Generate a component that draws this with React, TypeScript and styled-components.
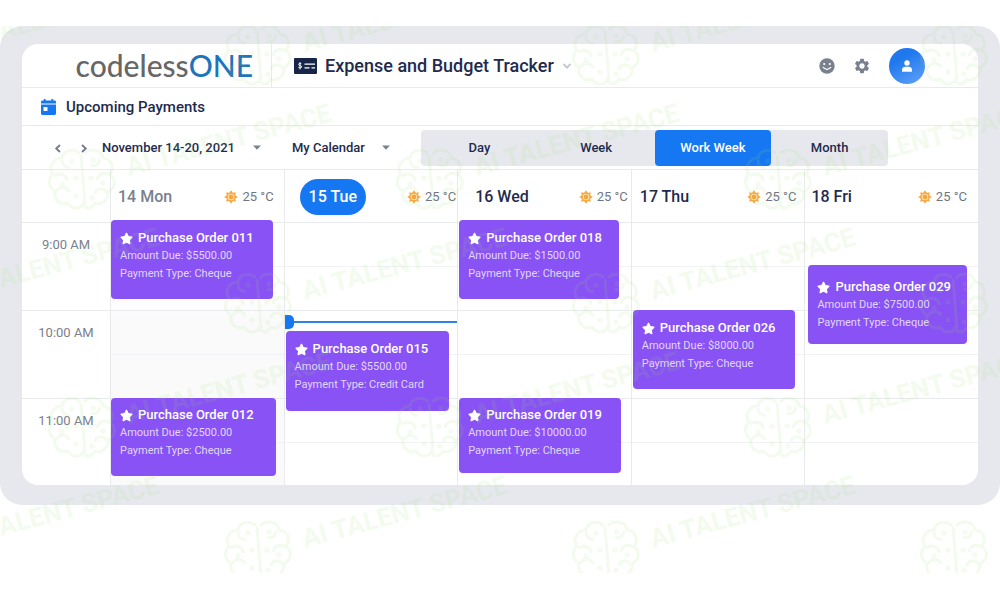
import React from 'react';
import styled, { createGlobalStyle, css } from 'styled-components';
import { MdSettings } from 'react-icons/md';
import { FaStar } from 'react-icons/fa';

const ink = '#1e2b4d';
const grey = '#7a808e';
const line = '#e8eaee';
const softLine = '#f1f2f5';
const blue = '#1677f2';

const GlobalStyle = createGlobalStyle`
  * { box-sizing: border-box; }
  body {
    margin: 0;
    background: #fff;
    color: ${ink};
    font-family: Roboto, "Liberation Sans", sans-serif;
  }
  button, select { font: inherit; color: inherit; border: 0; background: none; padding: 0; margin: 0; }
  h1, h2, h3, p { margin: 0; font-weight: inherit; font-size: inherit; }
`;

const Page = styled.div`
  position: relative;
  min-height: 573px;
  overflow: hidden;
  padding-top: 26px;
`;

const Frame = styled.div`
  background: #e7e8ee;
  border-radius: 22px;
  padding: 18px 22px 20px;
`;

const Panel = styled.main`
  background: #fff;
  border-radius: 16px;
  overflow: hidden;
`;

const TopBar = styled.header`
  display: flex;
  align-items: center;
  height: 44px;
  border-bottom: 1px solid ${line};
`;

const Logo = styled.a`
  display: flex;
  align-items: center;
  justify-content: flex-end;
  width: 250px;
  height: 43px;
  padding-right: 18px;
  border-right: 1px solid ${line};
  font: 500 30px/43px Lato, sans-serif;
  color: #666;
  text-decoration: none;
`;

const LogoAccent = styled.span`
  color: #1d74bb;
`;

const AppSwitcher = styled.button`
  display: flex;
  align-items: center;
  gap: 8px;
  margin-left: 22px;
  font-size: 18px;
  font-weight: 500;
  line-height: 24px;
`;

const Actions = styled.div`
  display: flex;
  align-items: center;
  gap: 18px;
  margin-left: auto;
  padding-right: 53px;
`;

const IconButton = styled.button`
  display: flex;
  color: ${grey};
`;

const Avatar = styled.button`
  display: flex;
  align-items: center;
  justify-content: center;
  width: 36px;
  height: 36px;
  border-radius: 50%;
  background: linear-gradient(150deg, #1f78ee 30%, #62a3f8);
`;

const TitleBar = styled.div`
  display: flex;
  align-items: center;
  gap: 10px;
  height: 38px;
  padding-left: 19px;
  border-bottom: 1px solid ${line};
  font-size: 15px;
  font-weight: 500;
  line-height: 20px;
`;

const Toolbar = styled.div`
  display: flex;
  align-items: center;
  height: 44px;
  padding-left: 30px;
  border-bottom: 1px solid ${line};
  font-size: 13px;
  font-weight: 500;
`;

const Arrows = styled.div`
  display: flex;
  gap: 14px;
  margin-right: 12px;
`;

const Picker = styled.label<{ $width: number }>`
  display: flex;
  align-items: center;
  justify-content: space-between;
  width: ${p => p.$width}px;
  margin-right: 31px;
`;

const PickerSelect = styled.select`
  appearance: none;
  font-weight: 500;
  line-height: 20px;
`;

const Views = styled.div`
  display: flex;
  width: 467px;
  border-radius: 4px;
  background: #e7e8ed;
`;

const ViewButton = styled.button<{ $active: boolean }>`
  flex: 1;
  height: 36px;
  border-radius: 4px;
  font-weight: 500;
  ${p => p.$active && css`
    background: ${blue};
    color: #fff;
  `}
`;

const Schedule = styled.div`
  display: grid;
  grid-template-columns: 88px repeat(5, 1fr);
`;

const Column = styled.section<{ $past?: boolean }>`
  position: relative;
  border-left: 1px solid ${line};
  background: ${p => (p.$past ? 'linear-gradient(#fff 120px, #fafafb 150px)' : '#fff')};
`;

const DayHeader = styled.div<{ $inset: number; $end: number }>`
  display: flex;
  align-items: center;
  justify-content: space-between;
  height: 53px;
  padding: 2px ${p => p.$end}px 0 ${p => p.$inset}px;
  border-bottom: 1px solid ${line};
`;

const DayName = styled.h2<{ $tone: 'past' | 'today' | 'next' }>`
  font-size: 16px;
  font-weight: 500;
  line-height: 36px;
  color: ${p => (p.$tone === 'past' ? grey : ink)};
  ${p => p.$tone === 'today' && css`
    padding: 0 9px;
    border-radius: 18px;
    background: ${blue};
    color: #fff;
  `}
`;

const Weather = styled.span`
  display: flex;
  align-items: center;
  gap: 4px;
  font-size: 13px;
  line-height: 20px;
  color: #6f7683;
`;

const TimeHeader = styled.div`
  height: 53px;
  border-bottom: 1px solid ${line};
`;

const Hour = styled.div`
  height: 88px;
  border-bottom: 1px solid ${line};
  &:last-of-type { height: 86px; border-bottom: 0; }
`;

const TimeLabel = styled(Hour)`
  padding-top: 12px;
  text-align: center;
  font-size: 13px;
  line-height: 20px;
  color: ${grey};
`;

const HalfHour = styled.div`
  height: 44px;
  border-bottom: 1px solid ${softLine};
`;

const Card = styled.article<{ $top: number; $height: number; $left: number; $right: number; $pad: number }>`
  position: absolute;
  top: ${p => p.$top}px;
  left: ${p => p.$left}px;
  right: ${p => p.$right}px;
  height: ${p => p.$height}px;
  padding: ${p => p.$pad}px 0 0 9px;
  border-radius: 4px;
  background: #8852f4;
  color: #e3d6fd;
  font-size: 11px;
  line-height: 18px;
  white-space: nowrap;
`;

const CardTitle = styled.h3`
  display: flex;
  align-items: center;
  gap: 5px;
  color: #fff;
  font-size: 13px;
  font-weight: 500;
  line-height: 18px;
`;

const NowLine = styled.span`
  position: absolute;
  top: 151px;
  left: 0;
  right: 0;
  height: 2px;
  background: #2e83e6;
  &::before {
    content: '';
    position: absolute;
    top: -6px;
    left: 0;
    width: 9px;
    height: 14px;
    border-radius: 0 5px 5px 0;
    background: ${blue};
  }
`;

const Watermark = styled.svg`
  position: absolute;
  top: 26px;
  left: 0;
  width: 100%;
  height: 547px;
  pointer-events: none;
`;

const CheckIcon = () => (
  <svg width="23" height="16" viewBox="0 0 23 16" aria-hidden="true">
    <rect width="23" height="16" rx="1" fill="#172648" />
    <path d="M7.4 5.8C7 5.2 4.600 5 4.600 6.500c0 1.400 3 .8 3 2.300 0 1.400-2.600 1.300-3.200.5M6 4.200v7.200" fill="none" stroke="#fff" strokeWidth="1" />
    <path d="M10.500 6.200H21M10.500 9.800h5M17.500 9.800H21" stroke="#fff" strokeWidth="1.300" />
  </svg>
);

const ChevronDown = () => (
  <svg width="10" height="8" viewBox="0 0 10 8" aria-hidden="true">
    <path d="M1.500 2 5 5.600 8.500 2" fill="none" stroke="#c3c7ce" strokeWidth="1.800" />
  </svg>
);

const Chevron = ({ flip }: { flip?: boolean }) => (
  <svg width="12" height="12" viewBox="0 0 12 12" aria-hidden="true">
    <path d={flip ? 'M4 3 7.800 6.500 4 10' : 'M8 3 4.200 6.500 8 10'} fill="none" stroke="#737a88" strokeWidth="1.800" />
  </svg>
);

const Caret = () => (
  <svg width="8" height="5" viewBox="0 0 8 5" aria-hidden="true">
    <path d="M0 .5h8L4 4.800z" fill={grey} />
  </svg>
);

const Smiley = () => (
  <svg width="16" height="16" viewBox="0 0 16 16" aria-hidden="true">
    <circle cx="8" cy="8" r="7.700" fill={grey} />
    <circle cx="5.200" cy="6" r="1.100" fill="#fff" />
    <circle cx="10.800" cy="6" r="1.100" fill="#fff" />
    <path d="M4.200 9.400q3.800 3.800 7.600 0" fill="none" stroke="#fff" strokeWidth="1.300" strokeLinecap="round" />
  </svg>
);

const Person = () => (
  <svg width="12" height="12" viewBox="0 0 12 12" aria-hidden="true">
    <circle cx="6" cy="3" r="2.700" fill="#fff" />
    <path d="M1 11.800V10c0-2 1.600-3.200 3.200-3.200h3.600C9.400 6.800 11 8 11 10v1.800z" fill="#fff" />
  </svg>
);

const CalendarIcon = () => (
  <svg width="15" height="16" viewBox="0 0 15 16" aria-hidden="true">
    <path d="M2.800 0h1.800v1.600h5.800V0h1.800v1.600H13.500A1.400 1.400 0 0 1 15 3v1.600H0V3a1.400 1.400 0 0 1 1.500-1.400h1.300z" fill={blue} />
    <path d="M0 5.400h15v9.200A1.400 1.400 0 0 1 13.600 16H1.400A1.400 1.400 0 0 1 0 14.600z" fill={blue} />
    <rect x="2.500" y="8" width="4" height="4" rx=".5" fill="#fff" />
  </svg>
);

const rays = [0, 45, 90, 135, 180, 225, 270, 315];

const Sun = () => (
  <svg width="14" height="14" viewBox="0 0 14 14" aria-hidden="true">
    {rays.map(angle => (
      <path key={angle} d="M5.200 3 7 .2 8.800 3z" fill="#f6a63c" transform={`rotate(${angle} 7 7)`} />
    ))}
    <circle cx="7" cy="7" r="3.900" fill="#fde6c4" stroke="#f6a63c" strokeWidth="1.200" />
    <circle cx="7" cy="7" r="2.400" fill="#f6a63c" />
  </svg>
);

const marks = [0, 1, 2, 3, 4].flatMap(row =>
  [-1, 0, 1, 2].map(col => ({ x: (row % 2 === 0 ? 258 : 82) + col * 348, y: 58 + row * 124 }))
).filter(mark => mark.x > -260);

const Brain = () => (
  <g fill="none" stroke="#9be36b" strokeWidth="3">
    <path d="M-2-28c-7-7-17-3-18 4-9 0-14 10-9 16-6 6-4 14 2 17-2 9 6 15 13 12 5 8 15 6 16-2M2-28c7-7 18-4 19 4 9 1 12 10 7 16 7 7 5 14-2 18 1 8-7 14-13 11-4 7-10 6-12 0M-1-27 3 22M-20-22c0 5 3 8 8 7M-28-6c6-4 13-1 13 5M-26 10c3-6 11-6 13 0M18-23c-1 6-5 8-9 6M28-7c-6-4-12-1-13 5M25 11c-3-6-11-5-12 1" />
    <circle cx="-10" cy="-21" r="1" /><circle cx="11" cy="-22" r="1" />
    <circle cx="-20" cy="2" r="1" /><circle cx="21" cy="1" r="1" />
    <circle cx="-6" cy="-4" r="1" /><circle cx="9" cy="-4" r="1" />
    <circle cx="-6" cy="14" r="1" /><circle cx="10" cy="16" r="1" />
  </g>
);

type Order = {
  id: string; amount: string; type?: string;
  top: number; height: number; left: number; right: number; pad?: number;
};

type Day = { name: string; tone: 'past' | 'today' | 'next'; inset: number; end: number; orders: Order[] };

const days: Day[] = [
  { name: '14 Mon', tone: 'past', inset: 7, end: 10, orders: [
    { id: '011', amount: '$5500.00', top: 50, height: 79, left: 0, right: 11 },
    { id: '012', amount: '$2500.00', top: 228, height: 78, left: 0, right: 8, pad: 8 },
  ] },
  { name: '15 Tue', tone: 'today', inset: 15, end: 1, orders: [
    { id: '015', amount: '$5500.00', type: 'Credit Card', top: 161, height: 80, left: 1, right: 8 },
  ] },
  { name: '16 Wed', tone: 'next', inset: 17, end: 3, orders: [
    { id: '018', amount: '$1500.00', top: 50, height: 79, left: 1, right: 12 },
    { id: '019', amount: '$10000.00', top: 228, height: 75, left: 1, right: 10, pad: 8 },
  ] },
  { name: '17 Thu', tone: 'next', inset: 8, end: 8, orders: [
    { id: '026', amount: '$8000.00', top: 140, height: 79, left: 1, right: 9 },
  ] },
  { name: '18 Fri', tone: 'next', inset: 6, end: 11, orders: [
    { id: '029', amount: '$7500.00', top: 95, height: 79, left: 3, right: 11, pad: 13 },
  ] },
];

const hours = ['9:00 AM', '10:00 AM', '11:00 AM'];
const views = ['Day', 'Week', 'Work Week', 'Month'];

const OrderCard = ({ order }: { order: Order }) => (
  <Card $top={order.top} $height={order.height} $left={order.left} $right={order.right} $pad={order.pad ?? 9}>
    <CardTitle><FaStar size={13} aria-hidden="true" />Purchase Order {order.id}</CardTitle>
    <p>Amount Due: {order.amount}</p>
    <p>Payment Type: {order.type ?? 'Cheque'}</p>
  </Card>
);

export default function App() {
  const [view, setView] = React.useState('Work Week');
  return (
    <Page>
      <GlobalStyle />
      <Frame>
        <Panel>
          <TopBar>
            <Logo href="#">codeless<LogoAccent>ONE</LogoAccent></Logo>
            <AppSwitcher aria-haspopup="menu">
              <CheckIcon />
              <h1>Expense and Budget Tracker</h1>
              <ChevronDown />
            </AppSwitcher>
            <Actions>
              <IconButton aria-label="Feedback"><Smiley /></IconButton>
              <IconButton aria-label="Settings"><MdSettings size={18} /></IconButton>
              <Avatar aria-label="Account"><Person /></Avatar>
            </Actions>
          </TopBar>
          <TitleBar>
            <CalendarIcon />
            <h2>Upcoming Payments</h2>
          </TitleBar>
          <Toolbar>
            <Arrows>
              <IconButton aria-label="Previous week"><Chevron /></IconButton>
              <IconButton aria-label="Next week"><Chevron flip /></IconButton>
            </Arrows>
            <Picker $width={159}>
              <PickerSelect aria-label="Date range"><option>November 14-20, 2021</option></PickerSelect>
              <Caret />
            </Picker>
            <Picker $width={98}>
              <PickerSelect aria-label="Calendar"><option>My Calendar</option></PickerSelect>
              <Caret />
            </Picker>
            <Views>
              {views.map(name => (
                <ViewButton key={name} $active={name === view} aria-pressed={name === view} onClick={() => setView(name)}>
                  {name}
                </ViewButton>
              ))}
            </Views>
          </Toolbar>
          <Schedule>
            <div>
              <TimeHeader />
              {hours.map(hour => <TimeLabel key={hour}>{hour}</TimeLabel>)}
            </div>
            {days.map(day => (
              <Column key={day.name} $past={day.tone === 'past'}>
                <DayHeader $inset={day.inset} $end={day.end}>
                  <DayName $tone={day.tone}>{day.name}</DayName>
                  <Weather><Sun />25 °C</Weather>
                </DayHeader>
                {hours.map(hour => <Hour key={hour}><HalfHour /></Hour>)}
                {day.tone === 'today' && <NowLine />}
                {day.orders.map(order => <OrderCard key={order.id} order={order} />)}
              </Column>
            ))}
          </Schedule>
        </Panel>
      </Frame>
      <Watermark aria-hidden="true" opacity="0.11">
        {marks.map(({ x, y }) => (
          <g key={`${x}-${y}`} transform={`translate(${x} ${y - 26})`}>
            <Brain />
            <text x="47" y="6" transform="rotate(-15)" fill="#9be36b" fontFamily="Roboto, sans-serif" fontWeight="700" fontSize="26">
              AI TALENT SPACE
            </text>
          </g>
        ))}
      </Watermark>
    </Page>
  );
}
